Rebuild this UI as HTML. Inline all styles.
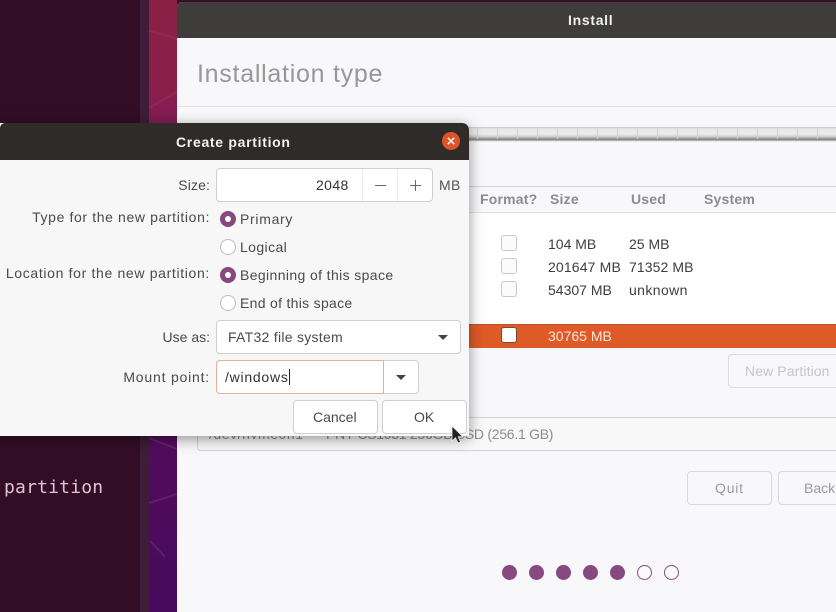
<!DOCTYPE html>
<html><head><meta charset="utf-8">
<style>
html,body{margin:0;padding:0;width:836px;height:612px;overflow:hidden;background:#330d26}
*{box-sizing:border-box}
div,span{position:absolute;white-space:nowrap}
body{font-family:"Liberation Sans","DejaVu Sans",sans-serif;font-size:14px;color:#3d3d3d}
.t{line-height:18px;height:18px}
.r{text-align:right}
.lab{left:0;width:210px;text-align:right;color:#4a4a4a;font-size:14px;line-height:18px;height:18px;letter-spacing:.12px}
.box{background:#fff;border:1px solid #cfcfd0;border-radius:4px}
.cb{left:501px;width:16px;height:16px;background:#fbfbfb;border:1px solid #c9c9c9;border-radius:3px}
.radio{left:220px;width:16px;height:16px;border-radius:50%;background:#fff;border:1px solid #bdbdbd}
.radio.on{background:#87477f;border:none}
.radio.on:after{content:"";position:absolute;left:5px;top:5px;width:6px;height:6px;border-radius:50%;background:#fff}
.dot{top:565px;width:15px;height:15px;border-radius:50%;background:#87497f}
.dot.off{background:#fafafb;border:1px solid #87497f}
.hd{top:190px;color:#8c8c8c;font-weight:bold;font-size:14px;line-height:18px;height:18px;letter-spacing:.2px}
</style></head><body>
<div style="left:0;top:0;width:140px;height:612px;background:#330d26"></div>
<div style="left:140px;top:0;width:9px;height:612px;background:#3f1c37"></div>
<div style="left:149px;top:0;width:28px;height:612px;background:linear-gradient(180deg,#8c1f44 0%,#8a1f4c 15%,#7c1a58 22%,#6e1458 45%,#520c5c 72%,#470a5c 100%)"></div>
<svg style="position:absolute;left:149px;top:0" width="28" height="612"><g fill="none" stroke="#c0567f" stroke-opacity=".16" stroke-width="2"><path d="M0 31 Q14 34 28 39"/><path d="M0 108 L28 92"/></g><g fill="none" stroke="#9a4a90" stroke-opacity=".3" stroke-width="2"><path d="M0 438 L28 449"/><path d="M0 503 L28 494"/><path d="M1 541 L16 557"/></g></svg>
<div style="left:4px;top:477px;font-family:'DejaVu Sans Mono','Liberation Mono',monospace;font-size:18px;line-height:22px;height:22px;color:#dcc6d6;letter-spacing:.2px">partition</div>

<!-- install window -->
<div style="left:177px;top:2px;width:659px;height:610px;background:#f8f8fa;border-radius:5px 0 0 0"></div>
<div style="left:177px;top:2px;width:659px;height:36px;background:#3e3d3b;border-radius:5px 0 0 0"></div>
<div class="t" style="left:568px;top:11px;color:#f0f0f0;font-weight:bold;font-size:14px;letter-spacing:.7px">Install</div>
<div style="left:197px;top:59px;font-size:25px;line-height:30px;height:30px;color:#979797;letter-spacing:.73px">Installation type</div>
<div style="left:177px;top:106px;width:659px;height:1px;background:#e3e3e4"></div>

<!-- partition bar -->
<div style="left:469px;top:127px;width:367px;height:15px;background:linear-gradient(180deg,#c4c4c4 0,#e6e6e6 2px,#ececec 7px,#c8c8c8 10px,#8a8a8a 12px,#8a8a8a 13px,#dcdcdc 14px,#f6f6f6 15px)"></div>
<div style="left:469px;top:127px;width:367px;height:12px;background:repeating-linear-gradient(90deg,transparent 0,transparent 19px,#d0d0d0 19px,#d0d0d0 20px);background-position:-11px 0"></div>

<!-- table -->
<div style="left:469px;top:186px;width:367px;height:1px;background:#d4d4d5"></div>
<div style="left:469px;top:212px;width:367px;height:1px;background:#e0e0e1"></div>
<div style="left:469px;top:213px;width:367px;height:111px;background:#fff"></div>
<div class="hd" style="left:480px">Format?</div>
<div class="hd" style="left:550px">Size</div>
<div class="hd" style="left:631px">Used</div>
<div class="hd" style="left:704px">System</div>
<div class="cb" style="top:235px"></div>
<div class="cb" style="top:258px"></div>
<div class="cb" style="top:281px"></div>
<div class="t" style="left:548px;top:235px">104 MB</div>
<div class="t" style="left:629px;top:235px">25 MB</div>
<div class="t" style="left:548px;top:258px;letter-spacing:.15px">201647 MB</div>
<div class="t" style="left:629px;top:258px;letter-spacing:.1px">71352 MB</div>
<div class="t" style="left:548px;top:281px">54307 MB</div>
<div class="t" style="left:629px;top:281px;letter-spacing:.4px">unknown</div>
<div style="left:469px;top:324px;width:367px;height:24px;background:#de5a27;border-top:1px solid #b9532f"></div>
<div class="cb" style="top:327px;background:#fff;border-color:#7a4a36"></div>
<div class="t" style="left:548px;top:327px;color:#fbe6dc">30765 MB</div>

<div style="left:728px;top:354px;width:120px;height:34px;border:1px solid #dcdcdd;border-radius:4px;background:#f8f8fa"></div>
<div class="t" style="left:745px;top:362px;color:#c6c6c7;letter-spacing:.1px">New Partition</div>

<div style="left:197px;top:417px;width:660px;height:34px;border:1px solid #d3d3d4;border-radius:4px;background:#f8f8f9"></div>
<div class="t" style="left:209px;top:425px;color:#8d8d8d;letter-spacing:.55px">/dev/nvme0n1</div>
<div class="t" style="left:326px;top:425px;color:#8d8d8d;letter-spacing:-.27px">PNY CS1031 256GB SSD (256.1 GB)</div>

<div style="left:687px;top:471px;width:85px;height:34px;border:1px solid #d9d9da;border-radius:4px;background:#f8f8fa"></div>
<div class="t" style="left:715px;top:479px;color:#9c9c9c;letter-spacing:.8px">Quit</div>
<div style="left:778px;top:471px;width:85px;height:34px;border:1px solid #d9d9da;border-radius:4px;background:#f8f8fa"></div>
<div class="t" style="left:804px;top:479px;color:#9c9c9c">Back</div>

<div class="dot" style="left:502px"></div>
<div class="dot" style="left:529px"></div>
<div class="dot" style="left:556px"></div>
<div class="dot" style="left:583px"></div>
<div class="dot" style="left:610px"></div>
<div class="dot off" style="left:637px"></div>
<div class="dot off" style="left:664px"></div>

<!-- dialog -->
<div style="left:-20px;top:123px;width:489px;height:313px;background:#f7f7f8;border-radius:7px 7px 0 0;box-shadow:0 3px 14px rgba(0,0,0,.42)"></div>
<div style="left:0;top:123px;width:469px;height:37px;background:#2f2b29;border-radius:5px 7px 0 0"></div>
<div class="t" style="left:176px;top:133px;color:#f2f2f2;font-weight:bold;font-size:14px;letter-spacing:.7px">Create partition</div>
<div style="left:442px;top:132px;width:18px;height:18px;border-radius:50%;background:#dc5428"></div>
<svg style="position:absolute;left:442px;top:132px" width="18" height="18"><path d="M5.8 5.8 L12.2 12.2 M12.2 5.8 L5.8 12.2" stroke="#fbe9e1" stroke-width="1.7"/></svg>

<div class="lab" style="top:176px">Size:</div>
<div class="box" style="left:216px;top:168px;width:217px;height:34px"></div>
<div style="left:362px;top:169px;width:1px;height:32px;background:#ececec"></div>
<div style="left:397px;top:169px;width:1px;height:32px;background:#ececec"></div>
<div class="t" style="left:316px;top:176px;color:#333;letter-spacing:.4px">2048</div>
<div style="left:375px;top:185px;width:11px;height:1px;background:#666"></div>
<div style="left:410px;top:185px;width:11px;height:1px;background:#666"></div>
<div style="left:415px;top:180px;width:1px;height:11px;background:#666"></div>
<div class="t" style="left:439px;top:176px;color:#555;letter-spacing:.3px">MB</div>

<div class="lab" style="top:208px;letter-spacing:.62px">Type for the new partition:</div>
<div class="radio on" style="top:211px"></div>
<div class="t" style="left:240px;top:210px;color:#4a4a4a;letter-spacing:.7px">Primary</div>
<div class="radio" style="top:239px"></div>
<div class="t" style="left:240px;top:238px;color:#4a4a4a;letter-spacing:.4px">Logical</div>
<div class="lab" style="top:264px;letter-spacing:.66px">Location for the new partition:</div>
<div class="radio on" style="top:267px"></div>
<div class="t" style="left:240px;top:266px;color:#4a4a4a;letter-spacing:.38px">Beginning of this space</div>
<div class="radio" style="top:295px"></div>
<div class="t" style="left:240px;top:294px;color:#4a4a4a;letter-spacing:.3px">End of this space</div>

<div class="lab" style="top:328px;letter-spacing:0">Use as:</div>
<div class="box" style="left:216px;top:320px;width:245px;height:34px"></div>
<div class="t" style="left:228px;top:328px;color:#4a4a4a;letter-spacing:.28px">FAT32 file system</div>
<svg style="position:absolute;left:437px;top:334px" width="12" height="8"><path d="M1 1 H11 L6 6 Z" fill="#444"/></svg>

<div class="lab" style="top:368px;letter-spacing:.8px">Mount point:</div>
<div class="box" style="left:216px;top:360px;width:203px;height:34px"></div>
<div style="left:216px;top:360px;width:168px;height:34px;background:#fff;border:1.5px solid #e3b09a;border-radius:4px 0 0 4px"></div>
<div class="t" style="left:225px;top:368px;color:#333;letter-spacing:.75px">/windows</div>
<div style="left:289px;top:369px;width:1px;height:16px;background:#222"></div>
<svg style="position:absolute;left:395px;top:374px" width="12" height="8"><path d="M1 1 H11 L6 6 Z" fill="#444"/></svg>

<div class="box" style="left:293px;top:400px;width:85px;height:34px"></div>
<div class="t" style="left:313px;top:408px;color:#4a4a4a">Cancel</div>
<div class="box" style="left:382px;top:400px;width:85px;height:34px"></div>
<div class="t" style="left:414px;top:408px;color:#4a4a4a">OK</div>

<svg style="position:absolute;left:451px;top:425px" width="14" height="20"><path d="M1 1 V16 L4.5 12.8 L7 18 L9.5 17 L7.2 11.8 H12 Z" fill="#222" stroke="#eee" stroke-width=".8"/></svg>
</body></html>
